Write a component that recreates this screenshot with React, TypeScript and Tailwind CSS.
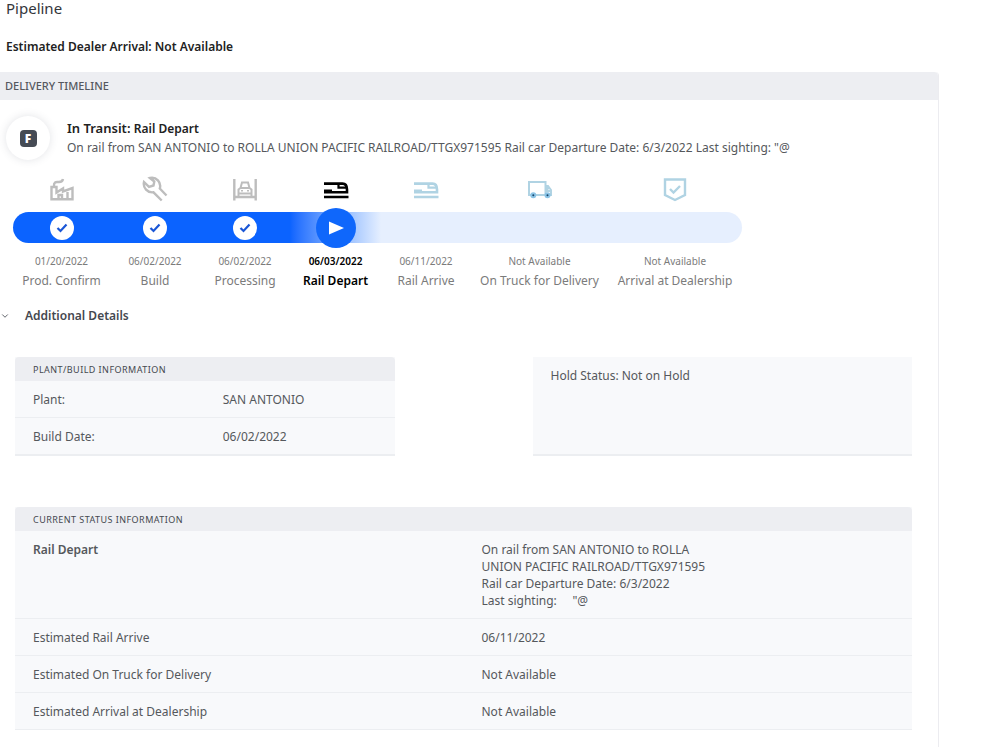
import React, { useState } from 'react';
import { ChevronDown } from 'lucide-react';

type StepStatus = 'done' | 'current' | 'upcoming';

interface Step {
  label: string;
  date: string;
  status: StepStatus;
  icon: React.FC;
}

interface InfoRow {
  label: string;
  value: string;
  strong?: boolean;
}

const FactoryIcon: React.FC = () => (
  <svg viewBox="0 0 26 26" className="size-[26px]" fill="none" stroke="currentColor" strokeWidth="2.4" aria-hidden="true">
    <path d="M2.500 23.300V11h5v5.500l6.500-4v3l9.500-3.500v11.300Z" />
    <path d="M5 10.500C4.500 6 7 5.800 9 6s4.500 0 5-3" />
    <path d="M9.500 23v-4h3.500v4M18.500 16v7" />
  </svg>
);

const WrenchIcon: React.FC = () => (
  <svg viewBox="0 0 26 26" className="size-[26px]" fill="none" stroke="currentColor" strokeWidth="2.4" aria-hidden="true">
    <path d="M19.700 24.500 11.500 16.300A8.500 8.500 0 0 1 2 6l5 4.800 4.500-1.300.8-4L8 2a8.300 8.300 0 0 1 9.800 10.500l6.700 7" />
  </svg>
);

const CarLiftIcon: React.FC = () => (
  <svg viewBox="0 0 26 26" className="size-[26px]" fill="none" stroke="currentColor" strokeWidth="2.4" aria-hidden="true">
    <path d="M2.300 3v21.500M23.700 3v21.500M2.300 21h21.400" />
    <path d="M6.500 21v-7.500l2-1.500L10 6.500h6l1.500 5.500 2 1.500V21M8.500 12h9M7 17.500h12" strokeWidth="2" />
    <path d="M9 14.800h2M15 14.800h2" strokeWidth="1.500" />
  </svg>
);

const TrainIcon: React.FC = () => (
  <svg viewBox="0 0 26 26" className="size-[26px]" fill="none" stroke="currentColor" strokeWidth="2.6" aria-hidden="true">
    <path d="M1 7.600h18.500c3 0 4.500 2.500 4.500 6v2.600H1M1 21h24.500" />
    <path d="M15.500 7.600v4H23" strokeWidth="2.200" />
    <path d="M1 14.800h8" />
  </svg>
);

const TruckIcon: React.FC = () => (
  <svg viewBox="0 0 26 26" className="size-[26px]" fill="none" stroke="currentColor" strokeWidth="2" aria-hidden="true">
    <path d="M4 19H2V6h16.500v13H8M18.500 10h2.500l3 4v5H22M20.500 11v4h4" />
    <circle cx="6.300" cy="19.300" r="2" fill="#17466b" stroke="#8cc4e6" />
    <circle cx="20.500" cy="19.300" r="2" fill="#17466b" stroke="#8cc4e6" />
  </svg>
);

const ShieldIcon: React.FC = () => (
  <svg viewBox="0 0 26 26" className="size-[26px]" fill="none" stroke="currentColor" strokeWidth="2.4" aria-hidden="true">
    <path d="M3 3.500h20v15.500L13 24 3 19ZM8 13l3.500 3.500L18 10" />
  </svg>
);

const steps: Step[] = [
  { label: 'Prod. Confirm', date: '01/20/2022', status: 'done', icon: FactoryIcon },
  { label: 'Build', date: '06/02/2022', status: 'done', icon: WrenchIcon },
  { label: 'Processing', date: '06/02/2022', status: 'done', icon: CarLiftIcon },
  { label: 'Rail Depart', date: '06/03/2022', status: 'current', icon: TrainIcon },
  { label: 'Rail Arrive', date: '06/11/2022', status: 'upcoming', icon: TrainIcon },
  { label: 'On Truck for Delivery', date: 'Not Available', status: 'upcoming', icon: TruckIcon },
  { label: 'Arrival at Dealership', date: 'Not Available', status: 'upcoming', icon: ShieldIcon },
];

const plantRows: InfoRow[] = [
  { label: 'Plant:', value: 'SAN ANTONIO' },
  { label: 'Build Date:', value: '06/02/2022' },
];

const statusRows: InfoRow[] = [
  {
    label: 'Rail Depart',
    value:
      'On rail from SAN ANTONIO to ROLLA\nUNION PACIFIC RAILROAD/TTGX971595\nRail car Departure Date: 6/3/2022\nLast sighting:\u00a0\u00a0\u00a0\u00a0 "@',
    strong: true,
  },
  { label: 'Estimated Rail Arrive', value: '06/11/2022' },
  { label: 'Estimated On Truck for Delivery', value: 'Not Available' },
  { label: 'Estimated Arrival at Dealership', value: 'Not Available' },
];

const iconColor: Record<StepStatus, string> = {
  done: 'text-[#bdbdbd]',
  current: 'text-black',
  upcoming: 'text-[#b0d3e3]',
};

const trackColor: Record<StepStatus, string> = {
  done: 'bg-[#0b63ff]',
  current: 'bg-linear-to-r from-[#0b63ff] to-[#e6effe]',
  upcoming: 'bg-[#e6effe]',
};

const StepMarker: React.FC<{ status: StepStatus }> = ({ status }) => {
  if (status === 'upcoming') return null;
  if (status === 'current') {
    return (
      <span className="size-10 -my-1 shrink-0 rounded-full bg-[#0f67fb] flex items-center justify-center">
        <svg viewBox="0 0 16 14" className="w-4 h-3.5" fill="white" aria-hidden="true">
          <path d="M1 0.500 16 7 1 13.500Z" />
        </svg>
      </span>
    );
  }
  return (
    <span className="size-6 rounded-full bg-white flex items-center justify-center">
      <svg viewBox="0 0 12 10" className="w-3 h-2.5" fill="none" stroke="#1a56d6" strokeWidth="2.200" aria-hidden="true">
        <path d="m1.500 5 3 3L10.500 1.500" />
      </svg>
    </span>
  );
};

const Timeline: React.FC = () => (
  <ol className="grid grid-cols-[97fr_90fr_90fr_91fr_90fr_137fr_134fr] max-w-[729px] ml-[13px] mt-4">
    {steps.map(({ label, date, status, icon: Icon }) => (
      <li key={label} className="group flex flex-col items-center whitespace-nowrap">
        <span className={`h-9 ${iconColor[status]}`}>
          <Icon />
        </span>
        <span className={`w-full h-[31px] flex items-center justify-center group-first:rounded-l-full group-last:rounded-r-full ${trackColor[status]}`}>
          <StepMarker status={status} />
        </span>
        <span className={`mt-2 text-[10px] leading-5 ${status === 'current' ? 'text-black font-semibold' : 'text-[#7b7b7b]'}`}>{date}</span>
        <span className={`text-[12px] leading-5 ${status === 'current' ? 'text-black font-semibold' : 'text-[#7b7b7b]'}`}>{label}</span>
      </li>
    ))}
  </ol>
);

const InfoTable: React.FC<{ title: string; rows: InfoRow[]; className?: string }> = ({ title, rows, className }) => (
  <table className={`w-full table-fixed bg-[#f8f9fb] text-[12px] leading-[17px] text-[#55585c] ${className ?? ''}`}>
    <thead>
      <tr>
        <th colSpan={2} className="h-6 px-[18px] text-left text-[9px] font-normal uppercase tracking-wider text-[#45484f] bg-[#edeef2] rounded-t-sm">
          {title}
        </th>
      </tr>
    </thead>
    <tbody>
      {rows.map(({ label, value, strong }) => (
        <tr key={label} className="border-b border-[#eceef1]">
          <th scope="row" className={`px-[18px] pt-[10px] pb-[9px] align-top text-left ${strong ? 'font-semibold' : 'font-normal'}`}>{label}</th>
          <td className="px-[18px] pt-[10px] pb-[9px] align-top whitespace-pre-line">{value}</td>
        </tr>
      ))}
    </tbody>
  </table>
);

export default function App() {
  const [showDetails, setShowDetails] = useState(true);

  return (
    <main className="bg-white min-h-screen font-['Noto_Sans',sans-serif] text-[#55585c]">
      <h1 className="pl-1.5 text-[15px] leading-4 text-[#33363b]">Pipeline</h1>
      <p className="pl-1.5 mt-[21px] mb-[15px] text-[12px] leading-5 font-semibold text-[#222]">Estimated Dealer Arrival: Not Available</p>

      <section className="mr-[66px] min-h-[675px] border-r border-[#ececf0] rounded-tr">
        <h2 className="h-7 pl-[5px] pt-px flex items-center bg-[#edeef2] rounded-tr text-[11px] font-medium text-[#55585f]">DELIVERY TIMELINE</h2>

        <div className="flex items-start pl-1.5 pt-4 gap-[17px]">
          <span className="size-11 shrink-0 rounded-full bg-white shadow-[0_0_8px_rgba(60,70,90,0.15)] flex items-center justify-center">
            <span className="size-[17px] rounded bg-[#454b54] text-white text-[12px] leading-[17px] font-black text-center">F</span>
          </span>
          <div className="pt-0.5">
            <p className="text-[13px] leading-5 font-semibold text-[#222]">
              In Transit: <span className="text-[12px]">Rail Depart</span>
            </p>
            <p className="text-[12px] leading-[18px]">
              On rail from SAN ANTONIO to ROLLA UNION PACIFIC RAILROAD/TTGX971595 Rail car Departure Date: 6/3/2022 Last sighting: "@
            </p>
          </div>
        </div>

        <Timeline />

        <button
          type="button"
          aria-expanded={showDetails}
          onClick={() => setShowDetails(!showDetails)}
          className="mt-[15px] flex items-center gap-[15px] text-[12px] leading-5 font-semibold text-[#45484f]"
        >
          <ChevronDown className={`size-2.5 ${showDetails ? '' : '-rotate-90'}`} />
          Additional Details
        </button>

        {showDetails && (
          <div className="pl-[15px] pr-[26px] pt-[31px]">
            <div className="grid grid-cols-2 gap-[138px]">
              <InfoTable title="Plant/Build Information" rows={plantRows} className="border-b-2 border-[#eceef1]" />
              <div className="bg-[#f8f9fb] border-b-2 border-[#eceef1] px-[18px] py-[10px] text-[12px] leading-[17px]">Hold Status: Not on Hold</div>
            </div>
            <InfoTable title="Current Status Information" rows={statusRows} className="mt-[51px]" />
          </div>
        )}
      </section>
    </main>
  );
}
